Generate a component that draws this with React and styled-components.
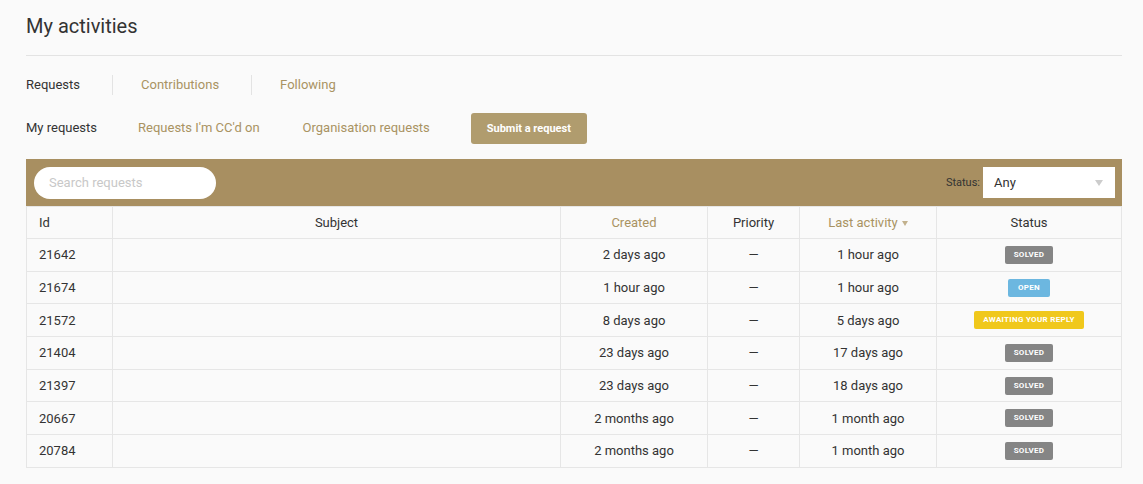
import React from "react";
import styled, { createGlobalStyle } from "styled-components";

const Global = createGlobalStyle`
  body {
    margin: 0;
    background: #fafafa;
    font-family: Roboto, "Liberation Sans", sans-serif;
    color: #333;
  }
`;

const Page = styled.div`
  padding: 0 21px 0 26px;
`;

const Title = styled.h1`
  margin: 0;
  padding-top: 14px;
  height: 41px;
  font-size: 20px;
  font-weight: 400;
  color: #333;
  border-bottom: 1px solid #e3e3e3;
`;

const Tabs = styled.nav`
  display: flex;
  align-items: center;
  margin-top: 19px;
  height: 20px;
`;

const Tab = styled.a`
  font-size: 13px;
  color: ${p => (p.active ? "#333" : "#a99362")};
  padding: 0 32px 0 ${p => (p.first ? "0" : "28px")};
  border-left: ${p => (p.first ? "none" : "1px solid #e3e3e3")};
  line-height: 20px;
`;

const SubNav = styled.div`
  display: flex;
  align-items: center;
  margin-top: 18px;
  height: 30px;
`;

const SubTab = styled.a`
  font-size: 13px;
  color: ${p => (p.active ? "#333" : "#a99362")};
  margin-right: ${p => p.gap}px;
  margin-top: -1px;
`;

const Button = styled.button`
  background: #b09c6e;
  color: #fff;
  border: none;
  border-radius: 3px;
  font-family: Roboto, "Liberation Sans", sans-serif;
  font-size: 11px;
  font-weight: 700;
  width: 116px;
  height: 31px;
`;

const Toolbar = styled.div`
  margin-top: 16px;
  background: #a88f61;
  height: 47px;
  display: flex;
  align-items: center;
  justify-content: space-between;
  padding: 0 7px 0 8px;
`;

const Search = styled.div`
  width: 182px;
  height: 32px;
  background: #fff;
  border-radius: 16px;
  box-sizing: border-box;
  padding-left: 15px;
  display: flex;
  align-items: center;
  font-size: 13px;
  color: #c8c8c8;
`;

const Filter = styled.div`
  display: flex;
  align-items: center;
  gap: 3px;
  font-size: 11px;
  color: #333;
`;

const Select = styled.div`
  width: 132px;
  height: 31px;
  background: #fff;
  box-sizing: border-box;
  padding: 0 12px 0 11px;
  display: flex;
  align-items: center;
  justify-content: space-between;
  font-size: 13px;
  color: #333;
`;

const Caret = styled.span`
  width: 0;
  height: 0;
  border-left: 4px solid transparent;
  border-right: 4px solid transparent;
  border-top: 6px solid #ccc;
`;

const Table = styled.table`
  width: 100%;
  border-collapse: collapse;
  background: #fafafa;
  font-size: 13px;
  table-layout: fixed;
`;

const Th = styled.th`
  font-weight: 400;
  height: 31px;
  padding: 0 12px;
  border: 1px solid #e6e6e6;
  text-align: ${p => p.align || "center"};
  color: ${p => (p.gold ? "#a99362" : "#333")};
`;

const Td = styled.td`
  height: 31.7px;
  padding: 0 12px;
  border: 1px solid #e6e6e6;
  text-align: ${p => p.align || "center"};
  color: #333;
`;

const SortArrow = styled.span`
  display: inline-block;
  margin-left: 4px;
  vertical-align: middle;
  border-left: 3px solid transparent;
  border-right: 3px solid transparent;
  border-top: 5px solid #c2b18d;
`;

const colors = {
  solved: "#858585",
  open: "#6cb7e0",
  awaiting: "#f0c81c",
};

const Badge = styled.span`
  display: inline-block;
  background: ${p => colors[p.kind]};
  color: #fff;
  font-size: 8px;
  font-weight: 700;
  text-transform: uppercase;
  border-radius: 2px;
  height: 18px;
  line-height: 18px;
  padding: 0 ${p => (p.kind === "open" ? "10px" : "9px")};
  letter-spacing: 0.3px;
  vertical-align: middle;
`;

const rows = [
  ["21642", "2 days ago", "1 hour ago", "solved", "Solved"],
  ["21674", "1 hour ago", "1 hour ago", "open", "Open"],
  ["21572", "8 days ago", "5 days ago", "awaiting", "Awaiting your reply"],
  ["21404", "23 days ago", "17 days ago", "solved", "Solved"],
  ["21397", "23 days ago", "18 days ago", "solved", "Solved"],
  ["20667", "2 months ago", "1 month ago", "solved", "Solved"],
  ["20784", "2 months ago", "1 month ago", "solved", "Solved"],
];

export default function App() {
  return (
    <Page>
      <Global />
      <Title>My activities</Title>
      <Tabs>
        <Tab first active>Requests</Tab>
        <Tab>Contributions</Tab>
        <Tab>Following</Tab>
      </Tabs>
      <SubNav>
        <SubTab active gap={41}>My requests</SubTab>
        <SubTab gap={43}>Requests I'm CC'd on</SubTab>
        <SubTab gap={41}>Organisation requests</SubTab>
        <Button>Submit a request</Button>
      </SubNav>
      <Toolbar>
        <Search>Search requests</Search>
        <Filter>
          Status:
          <Select>
            Any
            <Caret />
          </Select>
        </Filter>
      </Toolbar>
      <Table>
        <colgroup>
          <col style={{ width: 86 }} />
          <col style={{ width: 448 }} />
          <col style={{ width: 147 }} />
          <col style={{ width: 92 }} />
          <col style={{ width: 137 }} />
          <col />
        </colgroup>
        <thead>
          <tr>
            <Th align="left">Id</Th>
            <Th>Subject</Th>
            <Th gold>Created</Th>
            <Th>Priority</Th>
            <Th gold>
              Last activity<SortArrow />
            </Th>
            <Th>Status</Th>
          </tr>
        </thead>
        <tbody>
          {rows.map(r => (
            <tr key={r[0]}>
              <Td align="left">{r[0]}</Td>
              <Td />
              <Td>{r[1]}</Td>
              <Td>—</Td>
              <Td>{r[2]}</Td>
              <Td>
                <Badge kind={r[3]}>{r[4]}</Badge>
              </Td>
            </tr>
          ))}
        </tbody>
      </Table>
    </Page>
  );
}
